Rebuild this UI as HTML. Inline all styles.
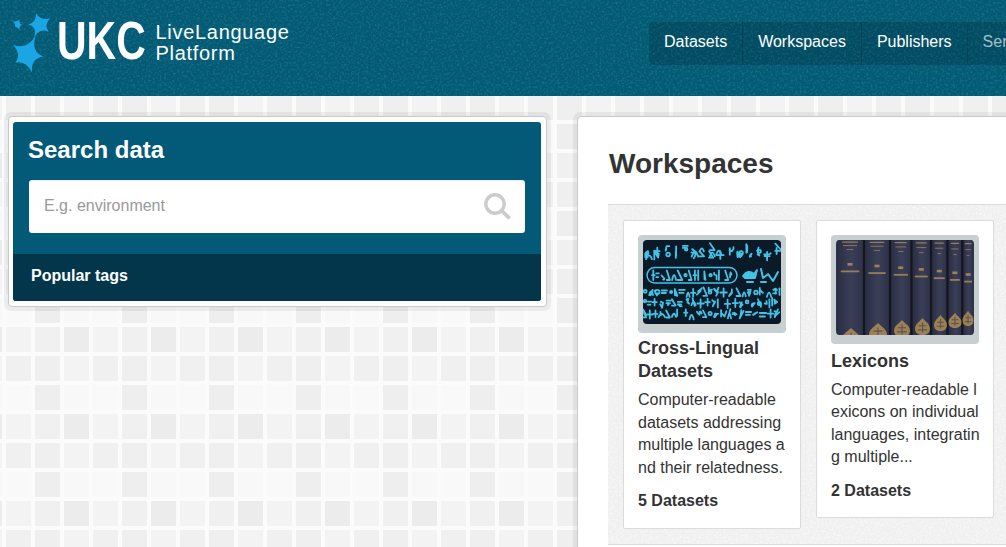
<!DOCTYPE html>
<html><head><meta charset="utf-8">
<style>
*{box-sizing:border-box;margin:0;padding:0}
html,body{width:1006px;height:547px;overflow:hidden;background:#fafafa;font-family:"Liberation Sans",sans-serif;position:relative}
#bg{position:absolute;left:0;top:0;width:1006px;height:547px}
.abs{position:absolute}
#header{position:absolute;left:0;top:0;width:1006px;height:96px;background:#025a74}
#stars{position:absolute;left:0;top:0;width:60px;height:80px}
#ukc{position:absolute;left:57px;top:12px;font-weight:bold;font-size:53px;line-height:58px;color:#fff;transform-origin:0 0;transform:scaleX(0.773);white-space:nowrap}
#ll{position:absolute;left:155.5px;top:22px;font-size:20px;line-height:20.6px;color:#fff;letter-spacing:0.7px;white-space:nowrap}
#nav{position:absolute;left:649px;top:22px;height:43px;width:420px;display:flex;overflow:hidden;background:rgba(0,0,0,0.15);border-radius:4px;white-space:nowrap}
#nav span{display:block;flex:none;height:43px;line-height:39px;padding:0 15px;font-size:16px;color:#fff;border-left:1px solid rgba(0,0,0,0.18)}
#nav span:first-child{border-left:none;padding-left:15px}
#nav span.muted{color:#a3c0c9}
.ring{position:absolute;background:rgba(0,0,0,0.055);border-radius:7px}
.panel{position:absolute;background:#fff;border:1px solid #c9c9c9;border-radius:4px}
#sbox{position:absolute;left:13px;top:122px;width:528px;height:179px;background:#025a78;border-radius:3px;overflow:hidden}
#sbox h2{position:absolute;left:15px;top:13px;font-size:24px;line-height:30px;color:#fff;font-weight:bold}
#input{position:absolute;left:16px;top:58px;width:496px;height:53px;background:#fff;border-radius:3px;box-shadow:inset 0 1px 1px rgba(0,0,0,0.08)}
#input .ph{position:absolute;left:15px;top:16px;font-size:16px;line-height:20px;color:#999}
#foot{position:absolute;left:0;top:132px;width:528px;height:47px;background:#03364a}
#foot span{position:absolute;left:18px;top:12px;font-size:16px;line-height:20px;font-weight:bold;color:#fff}
#wtitle{position:absolute;left:609px;top:147px;font-size:28px;line-height:34px;font-weight:bold;color:#333}
#gbox{position:absolute;left:608px;top:204px;width:420px;height:341px;background:#f0f0f0;border-top:1px solid #dcdcdc;border-bottom:1px solid #dcdcdc}
.card{position:absolute;background:#fff;border:1px solid #dcdcdc;border-radius:2px}
.frame{position:absolute;left:14px;top:14px;width:148px;background:#c7cfd1;border-radius:4px}
.card h3{position:absolute;left:14px;font-size:18px;line-height:23px;font-weight:bold;color:#333;width:149px}
.card p{position:absolute;left:14px;font-size:16px;line-height:22.6px;color:#333;width:149px;word-break:break-all}
.card .cnt{position:absolute;left:14px;font-size:16px;line-height:20px;font-weight:bold;color:#333}
</style></head><body>
<svg id="bg" width="1006" height="547">
<defs>
<pattern id="grid" x="6" y="8" width="87" height="87" patternUnits="userSpaceOnUse">
<rect x="0" y="0" width="25" height="25" fill="#f0f0f0"/>
<rect x="29" y="0" width="25" height="25" fill="#efefef"/>
<rect x="58" y="0" width="25" height="25" fill="#f3f3f3"/>
<rect x="0" y="29" width="25" height="25" fill="#f9f9f9"/>
<rect x="29" y="29" width="25" height="25" fill="#eeeeee"/>
<rect x="58" y="29" width="25" height="25" fill="#f8f8f8"/>
<rect x="0" y="58" width="25" height="25" fill="#f3f3f3"/>
<rect x="29" y="58" width="25" height="25" fill="#f0f0f0"/>
<rect x="58" y="58" width="25" height="25" fill="#ececec"/>
</pattern>
</defs>
<rect width="1006" height="547" fill="#fbfbfb"/>
<rect width="1006" height="547" fill="url(#grid)"/>
</svg>

<div id="header">
<svg style="position:absolute;left:0;top:0" width="1006" height="96"><filter id="nz" x="0" y="0" width="100%" height="100%"><feTurbulence type="fractalNoise" baseFrequency="0.45" numOctaves="2" seed="5"/><feColorMatrix values="0 0 0 0 0.25  0 0 0 0 0.6  0 0 0 0 0.7  0 0 0 3 -1.35"/></filter><rect width="1006" height="96" fill="#fff" filter="url(#nz)" opacity="0.16"/></svg>
<svg id="stars" width="60" height="80" viewBox="0 0 60 80">
<g fill="#1aa6e4">
<path d="M19.7 19.1 Q18.5 23.7 22.3 25 Q18.5 25.7 19.7 30.5 Q17.2 26.1 15.2 27.2 Q15.9 24.4 12 20.6 Q16.7 22.9 19.7 19.1Z"/>
<path d="M36 13.3 Q40.9 21.1 50.3 18 Q43.4 24.9 48.7 31.9 Q40.1 27.7 34.5 37 Q37.0 26.6 28.2 24.5 Q36.5 22.4 36 13.3Z"/>
<path d="M35.5 36 Q30.7 52.2 43.8 56.5 Q30.7 58.2 32 72.5 Q25.5 59.9 15.3 62.8 Q21.7 54.4 12.9 44.7 Q26.0 50.5 35.5 36Z"/>
</g>
</svg>
<div id="ukc">UKC</div>
<div id="ll">LiveLanguage<br>Platform</div>
<div id="nav"><span>Datasets</span><span>Workspaces</span><span>Publishers</span><span class="muted">Services</span></div>
</div>

<div class="ring" style="left:4px;top:112px;width:547px;height:199px"></div>
<div class="panel" style="left:8px;top:116px;width:539px;height:191px"></div>
<div id="sbox">
<h2>Search data</h2>
<div id="input"><span class="ph">E.g. environment</span>
<svg style="position:absolute;left:453px;top:10px" width="36" height="36" viewBox="0 0 36 36"><circle cx="13" cy="14" r="9.2" fill="none" stroke="#cccccc" stroke-width="3.4"/><line x1="20.5" y1="21.5" x2="26.5" y2="27.3" stroke="#cccccc" stroke-width="3.8" stroke-linecap="round"/></svg>
</div>
<div id="foot"><span>Popular tags</span></div>
</div>

<div class="ring" style="left:573px;top:112px;width:460px;height:460px"></div>
<div class="panel" style="left:577px;top:116px;width:450px;height:450px"></div>
<div id="wtitle">Workspaces</div>
<div id="gbox"><svg style="position:absolute;left:0;top:0" width="420" height="339"><filter id="nz2" x="0" y="0" width="100%" height="100%"><feTurbulence type="fractalNoise" baseFrequency="0.5" numOctaves="2" seed="9"/><feColorMatrix values="0 0 0 0 1  0 0 0 0 1  0 0 0 0 1  0 0 0 3 -1.35"/></filter><rect width="420" height="339" fill="#fff" filter="url(#nz2)" opacity="0.5"/></svg></div>

<div class="card" style="left:623px;top:220px;width:178px;height:309px">
<div class="frame" style="height:98px">
<svg style="position:absolute;left:5px;top:4.5px" width="138" height="84" viewBox="0 0 138 84"><defs><clipPath id="c1"><rect width="138" height="84" rx="4"/></clipPath></defs><g clip-path="url(#c1)"><rect width="138" height="84" fill="#0a1a29"/><g stroke="#43c3e6" stroke-width="1.8" fill="none" stroke-linecap="round" stroke-linejoin="round"><path d="M4.6 17.2L2.3 13.2L2.3 17.3L4.9 11.0"/><path d="M3.0 19.1q3.0 -7.5 6.0 0"/><circle cx="4.2" cy="13.1" r="1.3"/><path d="M11.4 11.2L15.8 13.7L15.1 17.6L11.9 12.5"/><path d="M12.0 11.2h4.6M14.3 7.6v7.3"/><path d="M11.3 10.6v8.8"/><circle cx="25.1" cy="14.5" r="1.8"/><path d="M26.3 6.2L23.6 6.1L22.6 10.5L23.3 9.0"/><path d="M33.1 6.5v9.0"/><path d="M32.8 11.7v6.2"/><path d="M39.8 5.8h5.0M39.8 7.8h4.0"/><circle cx="43.2" cy="9.4" r="1.2"/><path d="M49.1 9.1L53.6 12.8L49.5 9.3L52.6 13.5"/><path d="M48.4 12.4L51.4 13.4L52.8 14.5L50.8 18.3"/><path d="M48.7 16.6q3.3 -8.9 6.6 0"/><path d="M56.5 11.3l4.7 5.1M56.5 16.3h4.7"/><path d="M56.8 11.4q2.0 -6.1 4.1 0"/><path d="M66.9 16.3q2.4 -7.3 4.8 0"/><path d="M66.1 11.3l4.2 6.4M66.1 17.7h4.2"/><path d="M66.9 3.2l4.7 6.9M66.9 10.1h4.7"/><path d="M73.2 15.1q2.6 -8.7 5.2 0"/><path d="M73.9 15.1h6.8M77.3 11.2v7.7"/><path d="M86.8 8.2v6.5"/><path d="M90.5 7.2L90.5 8.9L88.8 11.2L86.7 10.5"/><path d="M94.4 11.7L94.6 17.1L94.1 13.0L97.3 17.0"/><circle cx="96.7" cy="14.9" r="1.8"/><circle cx="98.0" cy="13.1" r="1.9"/><path d="M103.4 4.2v8.6"/><path d="M106.8 16.8L108.6 13.7L107.0 15.4L108.0 16.3"/><path d="M104.2 5.9v6.1"/><path d="M114.5 14.4L114.7 14.4L116.4 15.6L114.2 10.7"/><circle cx="116.5" cy="11.4" r="1.5"/><path d="M115.6 7.5L114.5 11.2L115.7 12.1L115.5 12.3"/><path d="M122.7 16.3L121.2 14.4L126.3 14.2L127.7 13.3"/><path d="M121.6 16.1h5.1M124.1 11.8v8.5"/><path d="M133.6 7.8v6.3"/><path d="M132.3 3.7l6.8 7.2M132.3 10.9h6.8"/><rect x="4" y="27.5" width="90" height="15.5" rx="7.7" stroke-width="1.5"/><path d="M9.0 35.2h2.6M10.3 30.5v9.5"/><path d="M13.2 33.4h2.6M13.2 37.1h2.1"/><path d="M18.5 35.4L21.3 38.5L21.1 39.5L20.2 39.5"/><path d="M23.8 30.5l3.1 9.5M23.8 40.0h3.1"/><path d="M29.1 40.0q2.0 -9.5 3.9 0"/><path d="M34.7 30.5l4.6 9.5M34.7 40.0h4.6"/><circle cx="42.5" cy="35.2" r="1.2"/><path d="M45.7 30.5l2.9 9.5M45.7 40.0h2.9"/><path d="M50.4 35.2h3.0M51.9 30.5v9.5"/><path d="M55.2 30.5v9.5"/><path d="M62.4 39.9L61.3 31.4L61.5 39.3L62.2 39.2"/><circle cx="67.6" cy="35.2" r="1.2"/><path d="M73.6 39.4L73.6 35.5L71.4 34.5L71.1 33.0"/><path d="M75.9 30.5v9.5"/><path d="M82.2 30.5l3.1 9.5M82.2 40.0h3.1"/><path d="M87.1 37.4L87.1 35.3L87.6 32.4L88.5 34.6"/><path d="M100 36q5-7 11-2l3-4l-2 8h-10z" fill="#43c3e6"/><path d="M118 29l2 9l4-3M125 34l5 7l5-9M104 42h6M118 42h5" stroke-width="2"/><circle cx="2.2" cy="51.3" r="1.5"/><path d="M6.2 55.1q1.9 -7.6 3.8 0"/><path d="M8.9 54.3L9.6 49.8L7.3 55.3"/><circle cx="14.3" cy="52.0" r="2.1"/><path d="M11.7 50.5L13.9 55.5L14.6 53.3"/><path d="M18.7 50.5h5.2M18.7 53.0h4.2"/><circle cx="28.1" cy="52.1" r="1.1"/><path d="M31.8 50.0L32.0 55.1L34.4 55.8L31.7 49.0"/><path d="M36.1 49.9h5.7M36.1 52.8h4.5"/><path d="M43.6 56.9q1.5 -8.5 3.0 0"/><path d="M48.0 52.8h4.3M50.2 48.8v7.8"/><path d="M56.6 50.2L56.7 51.4L57.8 50.9L53.9 54.6"/><path d="M58.9 48.2L55.2 51.8L55.4 50.9"/><path d="M60.4 47.4l3.7 8.4M60.4 55.8h3.7"/><circle cx="67.0" cy="52.2" r="1.4"/><path d="M69.0 49.7L65.8 50.7L65.7 47.7"/><path d="M75.5 47.6L73.8 52.1L72.1 50.0L71.1 48.7"/><path d="M71.3 49.3L75.1 52.0L73.2 55.7"/><path d="M77.3 52.5h6.5M80.6 48.3v8.4"/><path d="M88.8 49.3L88.9 53.2L86.1 56.1L88.4 52.4"/><path d="M93.5 48.3l4.0 7.7M93.5 56.0h4.0"/><path d="M99.6 56.3q1.5 -7.8 3.1 0"/><path d="M104.7 49.8h3.2M104.7 52.7h2.5"/><path d="M107.5 50.9L106.2 55.8L105.4 51.7"/><circle cx="113.0" cy="52.4" r="1.8"/><path d="M116.8 47.9v6.6"/><path d="M117.6 50.3L117.5 50.8L119.9 52.8"/><path d="M123.9 56.9q2.1 -8.4 4.3 0"/><path d="M130.2 49.8h3.8M130.2 53.3h3.1"/><path d="M132.6 53.5L132.9 48.7L131.3 49.2"/><path d="M136.5 48.3v6.6"/><circle cx="2.0" cy="61.1" r="1.3"/><path d="M4.8 61.6h3.3M4.8 64.7h2.6"/><path d="M9.5 62.2h4.2M11.6 59.0v6.4"/><path d="M17.8 61.8L20.0 62.7L19.1 67.9L17.2 64.2"/><path d="M23.5 60.6h4.5M23.5 63.1h3.6"/><path d="M23.9 63.1L25.7 64.2L24.9 65.0"/><path d="M28.9 59.3l3.7 6.2M28.9 65.6h3.7"/><path d="M34.8 61.8h4.1M34.8 64.4h3.3"/><path d="M35.3 64.4L37.2 66.3L38.7 66.2"/><path d="M46.1 63.7L43.5 59.2L45.3 58.8L44.4 62.7"/><path d="M48.4 65.2q2.1 -6.5 4.3 0"/><path d="M51.6 65.9L49.6 58.2L50.6 62.9"/><path d="M54.4 63.5h6.4M57.6 59.3v8.4"/><path d="M62.1 62.1h4.9M64.6 58.7v6.8"/><path d="M69.2 60.1L72.0 62.6L72.0 61.5L69.7 66.3"/><path d="M74.8 59.4v8.1"/><path d="M81.9 63.9h5.3M84.6 59.7v8.4"/><path d="M89.7 63.1h5.2M92.3 59.0v8.1"/><path d="M98.8 62.4L97.8 64.2L97.4 67.4L98.1 66.0"/><path d="M97.0 66.3L99.6 64.8L96.5 62.3"/><circle cx="104.1" cy="61.9" r="1.4"/><path d="M108.6 65.5L109.3 63.6L111.7 63.0L109.0 66.6"/><circle cx="116.4" cy="63.6" r="1.6"/><path d="M115.0 59.2L117.9 66.8L117.9 65.0"/><path d="M123.9 63.8L121.8 63.5L123.8 63.5L123.5 61.1"/><path d="M126.4 59.5v7.9"/><path d="M129.1 58.0L129.2 65.6L129.2 58.7"/><path d="M131.6 63.8L134.1 62.0L131.2 59.6L132.2 63.3"/><path d="M0.0 69.8l3.1 7.5M0.0 77.3h3.1"/><path d="M1.3 74.0L3.1 75.0L0.2 69.7"/><path d="M4.2 74.5h5.3M6.8 70.4v8.2"/><path d="M10.3 73.8h4.3M12.5 70.4v6.7"/><path d="M15.5 77.2q3.2 -6.6 6.5 0"/><path d="M17.9 73.9L17.4 72.0L18.0 75.0"/><path d="M23.2 70.5l3.7 7.0M23.2 77.5h3.7"/><path d="M28.9 76.9q2.1 -6.3 4.2 0"/><path d="M34.1 69.4v6.6"/><path d="M41.1 72.7h3.3M42.8 69.5v6.5"/><path d="M46.5 79.4q2.1 -8.8 4.2 0"/><path d="M56.5 74.9L56.4 72.0L57.5 71.5L58.6 73.5"/><path d="M53.9 71.8L55.4 74.0L54.0 72.0"/><path d="M60.0 70.4l3.4 6.8M60.0 77.2h3.4"/><circle cx="67.1" cy="73.4" r="1.6"/><path d="M73.4 75.0L72.1 76.5L72.3 73.5L71.0 76.8"/><path d="M75.2 73.9L73.3 74.0L71.8 77.2"/><path d="M78.1 70.2v6.4"/><path d="M83.4 71.2L81.5 76.5L79.2 73.9"/><path d="M84.9 78.3q1.6 -9.0 3.1 0"/><path d="M87.0 75.6L86.1 74.3L87.4 69.1"/><path d="M90.0 73.0L90.4 73.4L90.7 73.9L89.4 74.1"/><path d="M93.6 74.4L91.4 72.7L92.1 75.2"/><path d="M100.6 71.0L96.6 78.4L97.8 74.6L98.3 70.2"/><path d="M102.9 72.0h5.2M102.9 74.9h4.1"/><path d="M110.6 74.7L114.3 72.2L109.9 74.9L112.1 73.3"/><path d="M116.7 73.0h6.5M116.7 76.5h5.2"/><path d="M124.7 73.6h5.8M127.6 69.4v8.2"/><path d="M131.5 71.1L133.2 71.7L131.9 76.1L136.2 72.3"/><path d="M134.9 69.4L131.7 77.1L133.3 73.5"/></g></g></svg>
</div>
<h3 style="top:116px">Cross-Lingual<br>Datasets</h3>
<p style="top:168px">Computer-readable datasets addressing multiple languages and their relatedness.</p>
<div class="cnt" style="top:270px">5 Datasets</div>
</div>

<div class="card" style="left:816px;top:220px;width:178px;height:298px">
<div class="frame" style="height:109px">
<svg style="position:absolute;left:5px;top:4.5px" width="138" height="95" viewBox="0 0 138 95"><defs><clipPath id="c2"><rect width="138" height="95" rx="4"/></clipPath><linearGradient id="sp" x1="0" x2="1"><stop offset="0" stop-color="#2a2e44"/><stop offset="0.55" stop-color="#3a3e57"/><stop offset="1" stop-color="#2e3249"/></linearGradient></defs><g clip-path="url(#c2)"><rect width="138" height="95" fill="#2f3249"/><rect x="1.0" y="0" width="26.0" height="95" fill="url(#sp)"/><rect x="29.0" y="0" width="24.0" height="95" fill="url(#sp)"/><rect x="55.0" y="0" width="19.5" height="95" fill="url(#sp)"/><rect x="76.5" y="0" width="17.5" height="95" fill="url(#sp)"/><rect x="96.0" y="0" width="14.5" height="95" fill="url(#sp)"/><rect x="112.5" y="0" width="12.8" height="95" fill="url(#sp)"/><rect x="127.3" y="0" width="9.7" height="95" fill="url(#sp)"/><rect x="26.9" y="0" width="2.2" height="95" fill="#15151d"/><rect x="52.9" y="0" width="2.2" height="95" fill="#15151d"/><rect x="74.4" y="0" width="2.2" height="95" fill="#15151d"/><rect x="93.9" y="0" width="2.2" height="95" fill="#15151d"/><rect x="110.4" y="0" width="2.2" height="95" fill="#15151d"/><rect x="125.2" y="0" width="2.2" height="95" fill="#15151d"/><g fill="#b8955a"><rect x="6.2" y="1.5" width="15.7" height="1.2" opacity="0.75"/><rect x="7.0" y="5.0" width="14.0" height="1.1" opacity="0.6"/><rect x="10.6" y="9.0" width="6.7" height="1" opacity="0.6"/><rect x="11.5" y="23.0" width="5" height="2.6" opacity="0.8"/><rect x="4.8" y="30.5" width="18.5" height="1.8" opacity="0.75"/><path d="M15.0 88.0C18.3 91.6 24.5 94.3 24.5 99.2C24.5 104.2 19.8 106.0 15.0 106.0C10.2 106.0 5.5 104.2 5.5 99.2C5.5 94.3 11.7 91.6 15.0 88.0Z" opacity="0.78"/><path d="M10.2 96.1h9.5M15.0 92.5v10.8M9.3 100.6h11.4" stroke="#3a3440" stroke-width="1.1" opacity="0.6"/><rect x="33.7" y="1.8" width="14.6" height="1.2" opacity="0.75"/><rect x="34.5" y="5.7" width="13.0" height="1.1" opacity="0.6"/><rect x="37.9" y="10.0" width="6.2" height="1" opacity="0.6"/><rect x="38.5" y="24.7" width="5" height="2.6" opacity="0.8"/><rect x="32.4" y="32.2" width="17.2" height="1.8" opacity="0.75"/><path d="M42.0 83.0C45.1 86.6 51.0 89.3 51.0 94.2C51.0 99.2 46.5 101.0 42.0 101.0C37.5 101.0 33.0 99.2 33.0 94.2C33.0 89.3 38.9 86.6 42.0 83.0Z" opacity="0.78"/><path d="M37.5 91.1h9.0M42.0 87.5v10.8M36.6 95.6h10.8" stroke="#3a3440" stroke-width="1.1" opacity="0.6"/><rect x="58.7" y="2.0" width="12.0" height="1.2" opacity="0.75"/><rect x="59.4" y="6.4" width="10.8" height="1.1" opacity="0.6"/><rect x="62.2" y="11.0" width="5.2" height="1" opacity="0.6"/><rect x="62.2" y="26.4" width="5" height="2.6" opacity="0.8"/><rect x="57.7" y="33.9" width="14.2" height="1.8" opacity="0.75"/><path d="M66.0 80.0C68.8 83.4 74.0 86.0 74.0 90.5C74.0 95.3 70.0 97.0 66.0 97.0C62.0 97.0 58.0 95.3 58.0 90.5C58.0 86.0 63.2 83.4 66.0 80.0Z" opacity="0.78"/><path d="M62.0 87.7h8.0M66.0 84.2v10.2M61.2 91.9h9.6" stroke="#3a3440" stroke-width="1.1" opacity="0.6"/><rect x="79.8" y="2.3" width="10.9" height="1.2" opacity="0.75"/><rect x="80.4" y="7.0" width="9.8" height="1.1" opacity="0.6"/><rect x="82.9" y="12.1" width="4.7" height="1" opacity="0.6"/><rect x="82.8" y="28.1" width="5" height="2.6" opacity="0.8"/><rect x="78.8" y="35.6" width="12.9" height="1.8" opacity="0.75"/><path d="M86.5 78.0C89.1 81.4 94.0 84.0 94.0 88.5C94.0 93.3 90.2 95.0 86.5 95.0C82.8 95.0 79.0 93.3 79.0 88.5C79.0 84.0 83.9 81.4 86.5 78.0Z" opacity="0.78"/><path d="M82.8 85.7h7.5M86.5 82.2v10.2M82.0 89.9h9.0" stroke="#3a3440" stroke-width="1.1" opacity="0.6"/><rect x="98.6" y="2.5" width="9.2" height="1.2" opacity="0.75"/><rect x="99.1" y="7.7" width="8.2" height="1.1" opacity="0.6"/><rect x="101.3" y="13.1" width="4.0" height="1" opacity="0.6"/><rect x="100.8" y="29.8" width="5" height="2.6" opacity="0.8"/><rect x="97.8" y="37.3" width="10.9" height="1.8" opacity="0.75"/><path d="M104.5 75.0C106.8 78.2 111.0 80.6 111.0 84.9C111.0 89.4 107.8 91.0 104.5 91.0C101.2 91.0 98.0 89.4 98.0 84.9C98.0 80.6 102.2 78.2 104.5 75.0Z" opacity="0.78"/><path d="M101.2 82.2h6.5M104.5 79.0v9.6M100.6 86.2h7.8" stroke="#3a3440" stroke-width="1.1" opacity="0.6"/><rect x="114.8" y="2.8" width="8.3" height="1.2" opacity="0.75"/><rect x="115.2" y="8.4" width="7.4" height="1.1" opacity="0.6"/><rect x="117.1" y="14.1" width="3.6" height="1" opacity="0.6"/><rect x="116.4" y="31.5" width="5" height="2.6" opacity="0.8"/><rect x="114.0" y="39.0" width="9.8" height="1.8" opacity="0.75"/><path d="M119.0 73.0C121.3 76.0 125.5 78.2 125.5 82.3C125.5 86.5 122.2 88.0 119.0 88.0C115.8 88.0 112.5 86.5 112.5 82.3C112.5 78.2 116.7 76.0 119.0 73.0Z" opacity="0.78"/><path d="M115.8 79.8h6.5M119.0 76.8v9.0M115.1 83.5h7.8" stroke="#3a3440" stroke-width="1.1" opacity="0.6"/><rect x="128.9" y="3.0" width="6.6" height="1.2" opacity="0.75"/><rect x="129.2" y="9.1" width="5.9" height="1.1" opacity="0.6"/><rect x="130.7" y="15.1" width="2.8" height="1" opacity="0.6"/><rect x="129.7" y="33.2" width="5" height="2.6" opacity="0.8"/><rect x="128.3" y="40.7" width="7.7" height="1.8" opacity="0.75"/><path d="M132.0 71.0C133.9 74.0 137.5 76.2 137.5 80.3C137.5 84.5 134.8 86.0 132.0 86.0C129.2 86.0 126.5 84.5 126.5 80.3C126.5 76.2 130.1 74.0 132.0 71.0Z" opacity="0.78"/><path d="M129.2 77.8h5.5M132.0 74.8v9.0M128.7 81.5h6.6" stroke="#3a3440" stroke-width="1.1" opacity="0.6"/></g></g></svg>
</div>
<h3 style="top:129px">Lexicons</h3>
<p style="top:157.5px">Computer-readable lexicons on individual languages, integrating multiple...</p>
<div class="cnt" style="top:260px">2 Datasets</div>
</div>
</body></html>
